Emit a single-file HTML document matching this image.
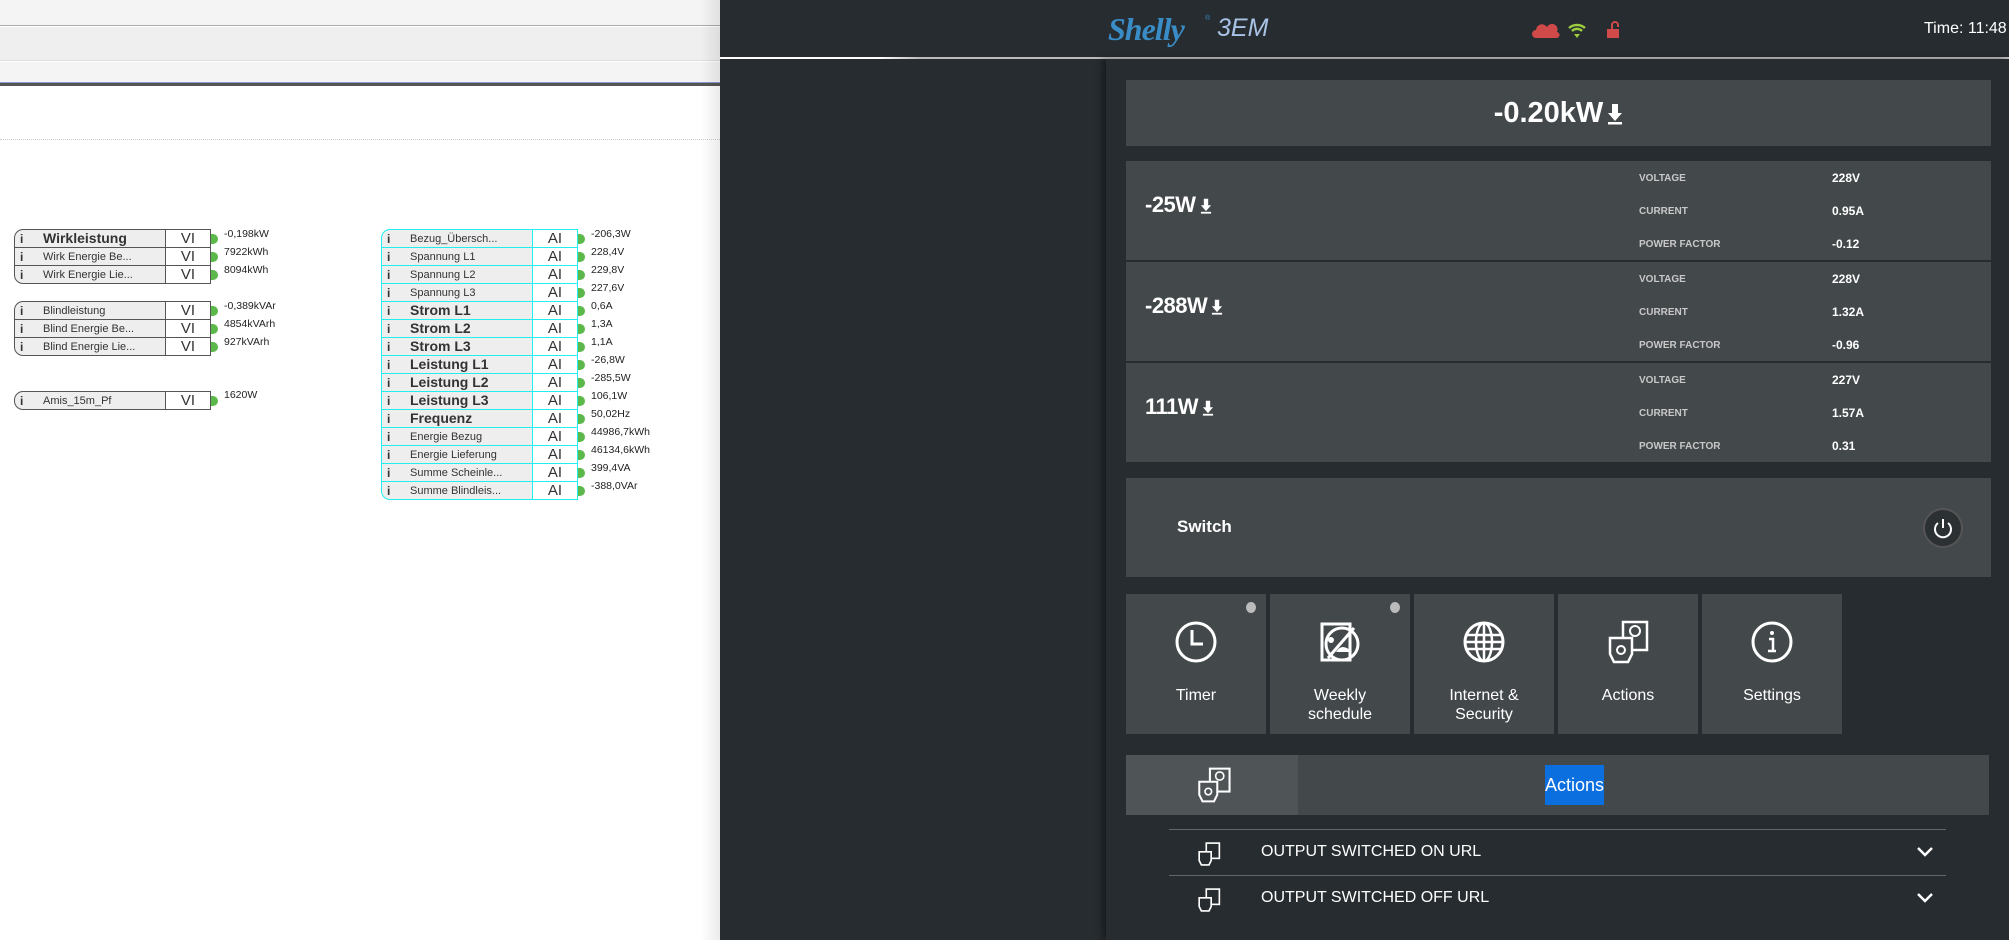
<!DOCTYPE html>
<html><head><meta charset="utf-8"><style>
*{margin:0;padding:0;box-sizing:border-box}
body{width:2009px;height:940px;position:relative;overflow:hidden;font-family:"Liberation Sans",sans-serif;background:#fff}
.a{position:absolute}
.blk{position:absolute;border:1px solid #555;border-radius:9px 0 0 9px;background:#eee}
.row{position:absolute;left:0;height:18px;width:100%;border-bottom:1px solid #555;font-size:11px;color:#333}
.row .i{position:absolute;left:5px;top:2px;font-weight:bold;font-size:12px}
.row .t{position:absolute;left:28px;top:3px;white-space:nowrap}
.row .t.b{font-weight:bold;font-size:14px;top:0}
.row .v{position:absolute;right:0;top:0;width:45px;height:17px;border-left:1px solid #555;background:#fff;text-align:center;font-size:15px;line-height:17px}
.row .g{position:absolute;right:-8px;top:4px;width:7px;height:10px;background:#5cb84a;border-radius:0 5px 5px 0}
.val{position:absolute;font-size:10.5px;color:#222;white-space:nowrap}
.cy{border-color:#2ee}
.cy .row{border-bottom-color:#2ee}
.cy .row .v{border-left-color:#2ee}
.card{position:absolute;left:1126px;width:865px;background:#43484b}
.lbl{position:absolute;left:513px;font-size:10px;font-weight:bold;color:#c8c8c8}
.vv{position:absolute;left:706px;font-size:12px;font-weight:bold;color:#fff}
.pw{position:absolute;left:19px;font-size:22px;font-weight:bold;color:#fff;letter-spacing:-0.5px}
.dn{display:inline-block;vertical-align:middle;margin-left:4px}
.tile{position:absolute;top:594px;width:140px;height:140px;background:#43484b;color:#fff;text-align:center;font-size:16px}
.tile svg{position:absolute;left:48px;top:26px}
.tile .l{position:absolute;left:0;width:100%;top:92px;line-height:19px}
.dot{position:absolute;right:10px;top:8px;width:10px;height:11px;border-radius:50%;background:#bbb}
.li{position:absolute;left:1169px;width:777px;height:46px;border-top:1px solid #666;color:#fff;font-size:16px}
</style></head><body>
<div class="a" style="left:0;top:0;width:720px;height:26px;background:#f4f4f4;border-bottom:1px solid #aaa"></div>
<div class="a" style="left:0;top:27px;width:720px;height:34px;background:#efefef;border-bottom:1px solid #ddd"></div>
<div class="a" style="left:0;top:62px;width:720px;height:20px;background:#f4f4f4"></div>
<div class="a" style="left:0;top:82px;width:720px;height:4px;background:#555;border-top:1px solid #8899cc"></div>
<div class="a" style="left:0;top:139px;width:720px;border-top:1px dotted #ccc"></div>
<div class="a" style="left:700px;top:0;width:20px;height:940px;background:linear-gradient(90deg,rgba(0,0,0,0),rgba(0,0,0,.08))"></div>

<div class="blk" style="left:14px;top:229px;width:197px;height:55px">
<div class="row" style="top:0"><span class="i">i</span><span class="t b">Wirkleistung</span><span class="v">VI</span><span class="g"></span></div>
<div class="row" style="top:18px"><span class="i">i</span><span class="t">Wirk Energie Be...</span><span class="v">VI</span><span class="g"></span></div>
<div class="row" style="top:36px;border:0"><span class="i">i</span><span class="t">Wirk Energie Lie...</span><span class="v">VI</span><span class="g"></span></div>
</div>
<div class="val" style="left:224px;top:228px">-0,198kW</div>
<div class="val" style="left:224px;top:246px">7922kWh</div>
<div class="val" style="left:224px;top:264px">8094kWh</div>
<div class="blk" style="left:14px;top:301px;width:197px;height:55px">
<div class="row" style="top:0"><span class="i">i</span><span class="t">Blindleistung</span><span class="v">VI</span><span class="g"></span></div>
<div class="row" style="top:18px"><span class="i">i</span><span class="t">Blind Energie Be...</span><span class="v">VI</span><span class="g"></span></div>
<div class="row" style="top:36px;border:0"><span class="i">i</span><span class="t">Blind Energie Lie...</span><span class="v">VI</span><span class="g"></span></div>
</div>
<div class="val" style="left:224px;top:300px">-0,389kVAr</div>
<div class="val" style="left:224px;top:318px">4854kVArh</div>
<div class="val" style="left:224px;top:336px">927kVArh</div>
<div class="blk" style="left:14px;top:391px;width:197px;height:19px">
<div class="row" style="top:0;border:0"><span class="i">i</span><span class="t">Amis_15m_Pf</span><span class="v">VI</span><span class="g"></span></div>
</div>
<div class="val" style="left:224px;top:389px">1620W</div>

<div class="blk cy" style="left:381px;top:229px;width:197px;height:271px">
<div class="row" style="top:0"><span class="i">i</span><span class="t">Bezug_Übersch...</span><span class="v">AI</span><span class="g"></span></div>
<div class="row" style="top:18px"><span class="i">i</span><span class="t">Spannung L1</span><span class="v">AI</span><span class="g"></span></div>
<div class="row" style="top:36px"><span class="i">i</span><span class="t">Spannung L2</span><span class="v">AI</span><span class="g"></span></div>
<div class="row" style="top:54px"><span class="i">i</span><span class="t">Spannung L3</span><span class="v">AI</span><span class="g"></span></div>
<div class="row" style="top:72px"><span class="i">i</span><span class="t b">Strom L1</span><span class="v">AI</span><span class="g"></span></div>
<div class="row" style="top:90px"><span class="i">i</span><span class="t b">Strom L2</span><span class="v">AI</span><span class="g"></span></div>
<div class="row" style="top:108px"><span class="i">i</span><span class="t b">Strom L3</span><span class="v">AI</span><span class="g"></span></div>
<div class="row" style="top:126px"><span class="i">i</span><span class="t b">Leistung L1</span><span class="v">AI</span><span class="g"></span></div>
<div class="row" style="top:144px"><span class="i">i</span><span class="t b">Leistung L2</span><span class="v">AI</span><span class="g"></span></div>
<div class="row" style="top:162px"><span class="i">i</span><span class="t b">Leistung L3</span><span class="v">AI</span><span class="g"></span></div>
<div class="row" style="top:180px"><span class="i">i</span><span class="t b">Frequenz</span><span class="v">AI</span><span class="g"></span></div>
<div class="row" style="top:198px"><span class="i">i</span><span class="t">Energie Bezug</span><span class="v">AI</span><span class="g"></span></div>
<div class="row" style="top:216px"><span class="i">i</span><span class="t">Energie Lieferung</span><span class="v">AI</span><span class="g"></span></div>
<div class="row" style="top:234px"><span class="i">i</span><span class="t">Summe Scheinle...</span><span class="v">AI</span><span class="g"></span></div>
<div class="row" style="top:252px;border:0"><span class="i">i</span><span class="t">Summe Blindleis...</span><span class="v">AI</span><span class="g"></span></div>
</div>
<div class="val" style="left:591px;top:228px">-206,3W</div>
<div class="val" style="left:591px;top:246px">228,4V</div>
<div class="val" style="left:591px;top:264px">229,8V</div>
<div class="val" style="left:591px;top:282px">227,6V</div>
<div class="val" style="left:591px;top:300px">0,6A</div>
<div class="val" style="left:591px;top:318px">1,3A</div>
<div class="val" style="left:591px;top:336px">1,1A</div>
<div class="val" style="left:591px;top:354px">-26,8W</div>
<div class="val" style="left:591px;top:372px">-285,5W</div>
<div class="val" style="left:591px;top:390px">106,1W</div>
<div class="val" style="left:591px;top:408px">50,02Hz</div>
<div class="val" style="left:591px;top:426px">44986,7kWh</div>
<div class="val" style="left:591px;top:444px">46134,6kWh</div>
<div class="val" style="left:591px;top:462px">399,4VA</div>
<div class="val" style="left:591px;top:480px">-388,0VAr</div>

<div class="a" style="left:720px;top:0;width:1289px;height:940px;background:#262c2f"></div>
<div class="a" style="left:720px;top:57px;width:1289px;height:2px;background:linear-gradient(90deg,#fff 0,#fff 160px,#bbb 200px,#bbb)"></div>
<div class="a" style="left:1106px;top:59px;width:903px;height:881px;background:#262c2f;box-shadow:-4px 0 6px rgba(0,0,0,.35)"></div>
<div class="a" style="left:1108px;top:11px;font-family:'Liberation Serif',serif;font-style:italic;font-weight:bold;font-size:32px;color:#3a8cc6;letter-spacing:-1px">Shelly</div>
<div class="a" style="left:1205px;top:15px;font-size:7px;color:#3a8cc6">®</div>
<div class="a" style="left:1217px;top:14px;font-style:italic;font-size:25px;color:#a9c3e6">3EM</div>
<svg class="a" style="left:1532px;top:19px" width="92" height="22" viewBox="0 0 92 22"><path d="M4 19a4 4 0 0 1 0-8 6 6 0 0 1 11-3 5 5 0 0 1 10 5 3 3 0 0 1-1 6z" fill="#cf4a48"/><path d="M37 9a12 12 0 0 1 16 0M40 12a7 7 0 0 1 10 0" stroke="#9ccc3f" stroke-width="2.5" fill="none"/><path d="M42 15h6l-3 4z" fill="#9ccc3f"/><path d="M80 10V6a3 3 0 0 1 6 0v2" stroke="#cf4a48" stroke-width="2" fill="none"/><rect x="75" y="10" width="12" height="9" fill="#cf4a48"/></svg>
<div class="a" style="left:1924px;top:20px;color:#fff;font-size:16px">Time: 11:48</div>

<div class="card" style="top:80px;height:66px"><div class="a" style="left:0;width:100%;top:17px;text-align:center;color:#fff;font-size:29px;font-weight:bold">-0.20kW<svg class="dn" width="16" height="22" viewBox="0 0 16 22"><path d="M5 1h6v9h4l-7 8-7-8h4z" fill="#fff"/><rect x="1" y="19" width="14" height="2.5" fill="#fff"/></svg></div></div>

<div class="card" style="top:161px;height:99px"><div class="pw" style="top:31px">-25W<svg class="dn" width="12" height="16" viewBox="0 0 16 22"><path d="M5 1h6v9h4l-7 8-7-8h4z" fill="#fff"/><rect x="1" y="19" width="14" height="2.5" fill="#fff"/></svg></div>
<div class="lbl" style="top:12px">VOLTAGE</div><div class="vv" style="top:10px">228V</div>
<div class="lbl" style="top:45px">CURRENT</div><div class="vv" style="top:43px">0.95A</div>
<div class="lbl" style="top:78px">POWER FACTOR</div><div class="vv" style="top:76px">-0.12</div></div>
<div class="card" style="top:262px;height:99px"><div class="pw" style="top:31px">-288W<svg class="dn" width="12" height="16" viewBox="0 0 16 22"><path d="M5 1h6v9h4l-7 8-7-8h4z" fill="#fff"/><rect x="1" y="19" width="14" height="2.5" fill="#fff"/></svg></div>
<div class="lbl" style="top:12px">VOLTAGE</div><div class="vv" style="top:10px">228V</div>
<div class="lbl" style="top:45px">CURRENT</div><div class="vv" style="top:43px">1.32A</div>
<div class="lbl" style="top:78px">POWER FACTOR</div><div class="vv" style="top:76px">-0.96</div></div>
<div class="card" style="top:363px;height:99px"><div class="pw" style="top:31px">111W<svg class="dn" width="12" height="16" viewBox="0 0 16 22"><path d="M5 1h6v9h4l-7 8-7-8h4z" fill="#fff"/><rect x="1" y="19" width="14" height="2.5" fill="#fff"/></svg></div>
<div class="lbl" style="top:12px">VOLTAGE</div><div class="vv" style="top:10px">227V</div>
<div class="lbl" style="top:45px">CURRENT</div><div class="vv" style="top:43px">1.57A</div>
<div class="lbl" style="top:78px">POWER FACTOR</div><div class="vv" style="top:76px">0.31</div></div>

<div class="card" style="top:478px;height:99px"><div class="a" style="left:51px;top:39px;color:#fff;font-size:17px;font-weight:bold">Switch</div>
<svg class="a" style="left:796px;top:29px" width="42" height="42" viewBox="0 0 42 42"><circle cx="21" cy="21" r="19" fill="#2b3033" stroke="#555" stroke-width="2"/><path d="M16 16a8 8 0 1 0 10 0M21 12v9" stroke="#fff" stroke-width="2" fill="none"/></svg></div>

<div class="tile" style="left:1126px"><div class="dot"></div><svg width="44" height="44" viewBox="0 0 44 44"><circle cx="22" cy="22" r="19" stroke="#fff" stroke-width="3" fill="none"/><path d="M18 10v14h11" stroke="#fff" stroke-width="3" fill="none"/></svg><div class="l">Timer</div></div>
<div class="tile" style="left:1270px"><div class="dot"></div><svg width="44" height="44" viewBox="0 0 44 44"><rect x="4" y="4" width="28" height="36" stroke="#fff" stroke-width="3" fill="none"/><circle cx="24" cy="24" r="16" stroke="#fff" stroke-width="3" fill="none"/><path d="M10 38L36 8" stroke="#fff" stroke-width="3"/><circle cx="13" cy="20" r="3" fill="#fff"/><path d="M18 32q6-10 16 0z" fill="#fff"/></svg><div class="l">Weekly<br>schedule</div></div>
<div class="tile" style="left:1414px"><svg width="44" height="44" viewBox="0 0 44 44"><circle cx="22" cy="22" r="19" stroke="#fff" stroke-width="3" fill="none"/><ellipse cx="22" cy="22" rx="8" ry="19" stroke="#fff" stroke-width="2.5" fill="none"/><path d="M22 3v38M4 15h36M4 29h36M3 22h38" stroke="#fff" stroke-width="2.5"/></svg><div class="l">Internet &amp;<br>Security</div></div>
<div class="tile" style="left:1558px"><svg width="44" height="44" viewBox="0 0 44 44"><rect x="17" y="2" width="24" height="28" stroke="#fff" stroke-width="2.5" fill="#43484b"/><circle cx="29" cy="11" r="5" stroke="#fff" stroke-width="2" fill="none"/><path d="M4 18h22v16l-4 8H8l-4-8z" stroke="#fff" stroke-width="2.5" fill="#43484b"/><circle cx="15" cy="30" r="4" stroke="#fff" stroke-width="2" fill="none"/></svg><div class="l">Actions</div></div>
<div class="tile" style="left:1702px"><svg width="44" height="44" viewBox="0 0 44 44"><circle cx="22" cy="22" r="19" stroke="#fff" stroke-width="3" fill="none"/><circle cx="22" cy="13" r="2" fill="#fff"/><path d="M19 19h4v12M18 31h8" stroke="#fff" stroke-width="2.5" fill="none"/></svg><div class="l">Settings</div></div>

<div class="card" style="top:755px;height:60px;width:863px"><div class="a" style="left:0;top:0;width:172px;height:60px;background:#4f5457"></div>
<svg class="a" style="left:70px;top:12px" width="36" height="36" viewBox="0 0 44 44"><rect x="17" y="2" width="24" height="28" stroke="#fff" stroke-width="2.5" fill="#4f5457"/><circle cx="29" cy="11" r="5" stroke="#fff" stroke-width="2" fill="none"/><path d="M4 18h22v16l-4 8H8l-4-8z" stroke="#fff" stroke-width="2.5" fill="#4f5457"/><circle cx="15" cy="30" r="4" stroke="#fff" stroke-width="2" fill="none"/></svg>
<div class="a" style="left:419px;top:10px;width:59px;height:40px;background:#0b6fe0;color:#fff;font-size:18px;line-height:40px;text-align:center">Actions</div></div>

<div class="li" style="top:829px"><svg class="a" style="left:28px;top:12px" width="24" height="24" viewBox="0 0 44 44"><rect x="17" y="2" width="24" height="28" stroke="#fff" stroke-width="3" fill="#262c2f"/><path d="M4 18h22v16l-4 8H8l-4-8z" stroke="#fff" stroke-width="3" fill="#262c2f"/></svg><div class="a" style="left:92px;top:13px">OUTPUT SWITCHED ON URL</div><svg class="a" style="left:747px;top:16px" width="18" height="12"><path d="M2 2l7 7 7-7" stroke="#fff" stroke-width="2.5" fill="none"/></svg></div>
<div class="li" style="top:875px"><svg class="a" style="left:28px;top:12px" width="24" height="24" viewBox="0 0 44 44"><rect x="17" y="2" width="24" height="28" stroke="#fff" stroke-width="3" fill="#262c2f"/><path d="M4 18h22v16l-4 8H8l-4-8z" stroke="#fff" stroke-width="3" fill="#262c2f"/></svg><div class="a" style="left:92px;top:13px">OUTPUT SWITCHED OFF URL</div><svg class="a" style="left:747px;top:16px" width="18" height="12"><path d="M2 2l7 7 7-7" stroke="#fff" stroke-width="2.5" fill="none"/></svg></div>
</body></html>
